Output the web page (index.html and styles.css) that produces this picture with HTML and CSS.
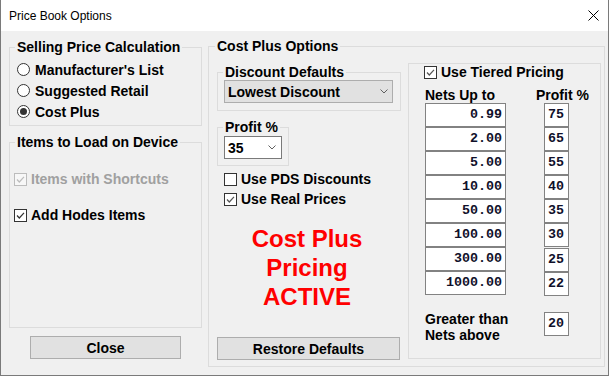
FILE: index.html
```html
<!DOCTYPE html>
<html lang="en">
<head>
  <meta charset="UTF-8">
  <title>Price Book Options</title>
  <link rel="stylesheet" href="styles.css">
</head>
<body>

<div class="window">
  <!-- Title bar -->
  <div class="titlebar">
    <span class="title">Price Book Options</span>
    <span class="close-x">
      <svg width="11" height="11" viewBox="0 0 11 11"><path d="M0.5 0.5 L10.5 10.5 M10.5 0.5 L0.5 10.5" stroke="#000" stroke-width="1" fill="none"/></svg>
    </span>
  </div>

  <div class="client">
    <!-- Left column -->
    <div class="left-col">
      <fieldset class="group calc-group">
        <legend>Selling Price Calculation</legend>
        <div class="radio-row"><span class="radio"></span>Manufacturer's List</div>
        <div class="radio-row"><span class="radio"></span>Suggested Retail</div>
        <div class="radio-row"><span class="radio on"></span>Cost Plus</div>
      </fieldset>

      <fieldset class="group load-group">
        <legend>Items to Load on Device</legend>
        <div class="check-row disabled first">
          <span class="check"><svg width="11" height="11" viewBox="0 0 11 11"><path d="M2 5.5 L4.3 8 L9 2.8" stroke="#bcbcbc" stroke-width="1.2" fill="none"/></svg></span>Items with Shortcuts
        </div>
        <div class="check-row second">
          <span class="check"><svg width="11" height="11" viewBox="0 0 11 11"><path d="M2 5.5 L4.3 8 L9 2.8" stroke="#333" stroke-width="1.2" fill="none"/></svg></span>Add Hodes Items
        </div>
      </fieldset>

      <button class="btn close-btn">Close</button>
    </div>

    <!-- Right column -->
    <div class="right-col">
      <fieldset class="group cp-group">
        <legend>Cost Plus Options</legend>

        <div class="cp-left">
          <fieldset class="group discount-group">
            <legend>Discount Defaults</legend>
            <div class="combo discount-combo">
              <span>Lowest Discount</span>
              <svg width="8" height="5" viewBox="0 0 8 5"><path d="M0.5 0.5 L4 4 L7.5 0.5" stroke="#606060" stroke-width="1" fill="none"/></svg>
            </div>
          </fieldset>

          <fieldset class="group profit-group">
            <legend>Profit %</legend>
            <div class="combo profit-combo">
              <span>35</span>
              <svg width="8" height="5" viewBox="0 0 8 5"><path d="M0.5 0.5 L4 4 L7.5 0.5" stroke="#606060" stroke-width="1" fill="none"/></svg>
            </div>
          </fieldset>

          <div class="check-row opt-row">
            <span class="check"></span>Use PDS Discounts
          </div>
          <div class="check-row opt-row">
            <span class="check"><svg width="11" height="11" viewBox="0 0 11 11"><path d="M2 5.5 L4.3 8 L9 2.8" stroke="#555" stroke-width="1.2" fill="none"/></svg></span>Use Real Prices
          </div>

          <div class="active-note">Cost Plus<br>Pricing<br>ACTIVE</div>

          <button class="btn restore-btn">Restore Defaults</button>
        </div>

        <!-- Tiered pricing -->
        <div class="tier-box">
          <div class="check-row tier-check">
            <span class="check"><svg width="11" height="11" viewBox="0 0 11 11"><path d="M2 5.5 L4.3 8 L9 2.8" stroke="#555" stroke-width="1.2" fill="none"/></svg></span>Use Tiered Pricing
          </div>
          <div class="tier-heads">
            <span class="nets-head">Nets Up to</span>
            <span>Profit %</span>
          </div>
          <div class="tier-grid">
            <div class="cell net">0.99</div><div class="cell pct">75</div>
            <div class="cell net">2.00</div><div class="cell pct">65</div>
            <div class="cell net">5.00</div><div class="cell pct">55</div>
            <div class="cell net">10.00</div><div class="cell pct">40</div>
            <div class="cell net">50.00</div><div class="cell pct">35</div>
            <div class="cell net">100.00</div><div class="cell pct">30</div>
            <div class="cell net">300.00</div><div class="cell pct shift">25</div>
            <div class="cell net">1000.00</div><div class="cell pct shift">22</div>
          </div>
          <div class="greater-row">
            <span class="greater-label">Greater than<br>Nets above</span>
            <div class="cell pct">20</div>
          </div>
        </div>
      </fieldset>
    </div>
  </div>
</div>

</body>
</html>
```

FILE: styles.css
```css
* { box-sizing: border-box; }

body {
  margin: 0;
  width: 609px;
  height: 376px;
  overflow: hidden;
  font-family: "Liberation Sans", Arial, sans-serif;
  font-size: 14px;
  font-weight: bold;
  line-height: 16px;
  color: #000;
  background: #fff;
}

.window {
  width: 609px;
  height: 376px;
  border: 1px solid #7a7a7a;
  border-top: none;
  display: flex;
  flex-direction: column;
  background: #f0f0f0;
}

/* Title bar */
.titlebar {
  height: 31px;
  background: #fff;
  display: flex;
  align-items: center;
  padding-left: 8px;
  padding-right: 9px;
}

.title {
  font-size: 12px;
  font-weight: normal;
}

.close-x {
  margin-left: auto;
  display: flex;
}

/* Client area */
.client {
  flex: 1;
  display: flex;
  gap: 6px;
  padding: 0 3px 0 8px;
}

.group {
  margin: 0;
  padding: 0;
  border: 1px solid #dcdcdc;
  min-width: 0;
}

.group legend {
  padding: 0 2px;
  margin-left: 5px;
  line-height: 16px;
}

/* Left column */
.left-col {
  width: 193px;
  display: flex;
  flex-direction: column;
  padding-bottom: 16px;
}

.calc-group {
  margin-top: 8px;
  padding: 4px 0 3px 0;
}

.radio-row {
  height: 21px;
  display: flex;
  align-items: center;
  gap: 5px;
  padding-left: 7px;
}

.radio {
  width: 13px;
  height: 13px;
  border: 1px solid #333;
  border-radius: 50%;
  background: #fff;
  display: flex;
  align-items: center;
  justify-content: center;
}

.radio.on::after {
  content: "";
  width: 7px;
  height: 7px;
  border-radius: 50%;
  background: #333;
}

.load-group {
  margin-top: 8px;
  flex: 1;
  padding-top: 19px;
}

.check-row {
  height: 20px;
  display: flex;
  align-items: center;
  gap: 4px;
  padding-left: 4px;
}

.check-row.second { margin-top: 16px; }

.check {
  width: 13px;
  height: 13px;
  border: 1px solid #333;
  background: #fff;
  display: flex;
}

.check-row.disabled { color: #a0a0a0; }
.check-row.disabled .check { border-color: #bcbcbc; background: #f7f7f7; }

.btn {
  height: 23px;
  background: #e1e1e1;
  border: 1px solid #adadad;
  font-family: inherit;
  font-size: 14px;
  font-weight: bold;
  color: #000;
  padding: 0;
}

.close-btn {
  margin-top: 8px;
  margin-left: 21px;
  width: 151px;
}

/* Right column */
.right-col {
  width: 397px;
  display: flex;
  flex-direction: column;
  padding-bottom: 8px;
}

.cp-group {
  margin-top: 7px;
  flex: 1;
  display: flex;
  gap: 7px;
  padding: 0 3px 0 8px;
}

.cp-group > legend { margin-left: -2px; }

.cp-left {
  width: 184px;
  display: flex;
  flex-direction: column;
  padding-bottom: 6px;
}

.discount-group {
  margin-top: 10px;
  padding: 0 0 7px 6px;
}

.profit-group {
  margin-top: 8px;
  width: 72px;
  padding: 1px 0 6px 6px;
}

.discount-group legend,
.profit-group legend { margin-left: -1px; }

.combo {
  height: 23px;
  display: flex;
  align-items: center;
  justify-content: space-between;
  padding: 0 4px 0 3px;
}

.discount-combo {
  width: 169px;
  background: #e1e1e1;
  border: 1px solid #adadad;
}

.profit-combo {
  width: 58px;
  background: #fff;
  border: 1px solid #7a7a7a;
  padding-right: 5px;
}

.opt-row {
  padding-left: 7px;
}

.opt-row:first-of-type { margin-top: 3px; }

.active-note {
  margin-top: 15px;
  padding-right: 4px;
  font-size: 24px;
  line-height: 29px;
  color: #ff0000;
  text-align: center;
}

.restore-btn {
  margin-top: auto;
  width: 183px;
}

/* Tiered pricing */
.tier-box {
  width: 193px;
  margin: 9px 0 7px 0;
  border: 1px solid #dcdcdc;
  padding-left: 15px;
}

.tier-check {
  height: 16px;
  padding-left: 0;
}

.tier-heads {
  margin-top: 7px;
  height: 16px;
  display: flex;
  padding-left: 1px;
}

.nets-head { width: 111px; }

.tier-grid {
  display: grid;
  grid-template-columns: 81px 25px;
  column-gap: 38px;
  margin-left: 1px;
}

.cell {
  height: 24px;
  border: 1px solid #828282;
  background: #fff;
  font-family: "Liberation Mono", "Courier New", monospace;
  font-size: 13.33px;
  color: #10102a;
  display: flex;
  align-items: center;
}

.cell.net {
  justify-content: flex-end;
  padding-right: 3px;
}

.cell.pct {
  padding-left: 3px;
}

.cell.shift { transform: translateY(1px); }

.greater-row {
  margin-top: 16px;
  margin-left: 1px;
  display: flex;
}

.greater-label {
  width: 119px;
}

.greater-row .cell {
  width: 25px;
  margin-top: 1px;
}
```
